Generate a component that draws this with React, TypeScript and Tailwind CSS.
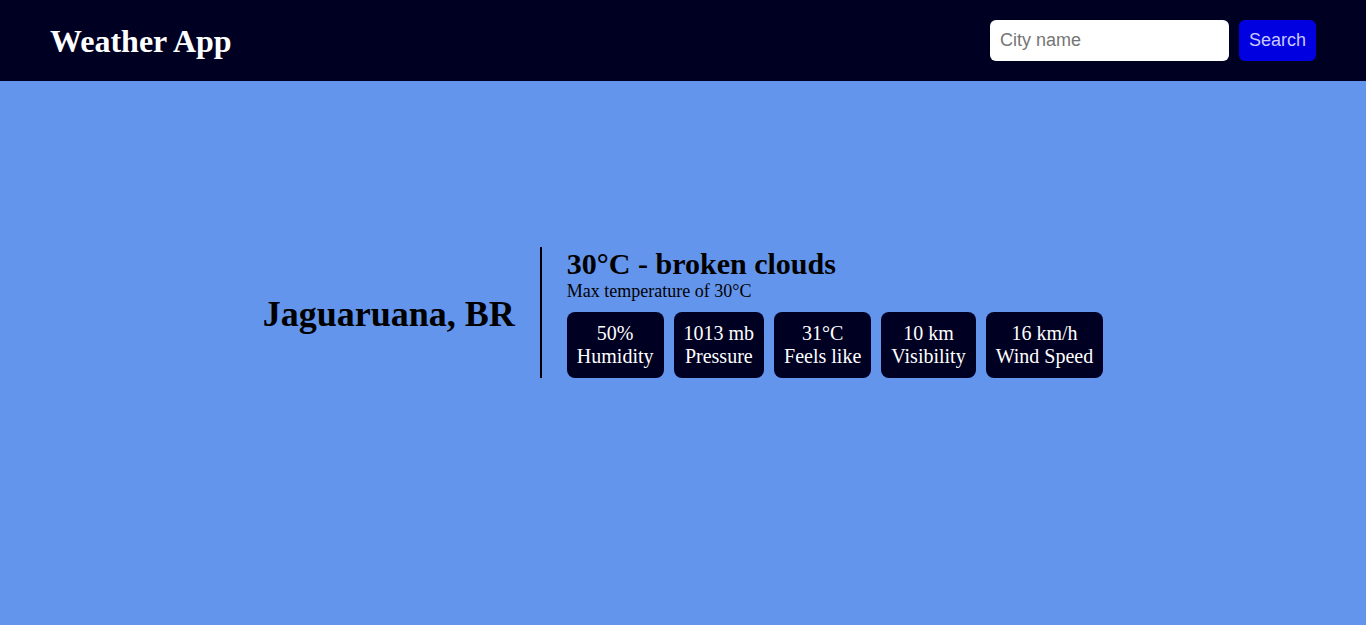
import { useState } from 'react'

const stats = [
    { value: '50%', label: 'Humidity' },
    { value: '1013 mb', label: 'Pressure' },
    { value: '31°C', label: 'Feels like' },
    { value: '10 km', label: 'Visibility' },
    { value: '16 km/h', label: 'Wind Speed' },
]

export default function App() {
    const [city, setCity] = useState('')

    return (
        <div className="min-h-screen bg-[#6495ed] font-['Liberation_Serif',serif]">
            <header className="flex items-center justify-between h-[81px] bg-[#000022] pl-[50px] pr-[50px]">
                <h1 className="text-[32px] font-bold text-white leading-none">
                    Weather App
                </h1>
                <div className="flex items-center gap-[10px]">
                    <input
                        value={city}
                        onChange={(e) => setCity(e.target.value)}
                        placeholder="City name"
                        className="w-[239px] h-[41px] rounded-[6px] bg-white px-[10px] text-[18px] font-['Liberation_Sans',sans-serif] text-black placeholder:text-[#757575] outline-none"
                    />
                    <button className="h-[41px] px-[10px] rounded-[6px] bg-[#0000e0] text-[#c8c8ff] text-[18px] font-['Liberation_Sans',sans-serif]">
                        Search
                    </button>
                </div>
            </header>
            <main className="flex justify-center pt-[166px]">
                <div className="flex items-stretch">
                    <div className="flex items-center pr-[25px] border-r-2 border-black">
                        <h2 className="text-[36px] font-bold text-black leading-none pt-[2px]">
                            Jaguaruana, BR
                        </h2>
                    </div>
                    <div className="pl-[25px] text-black">
                        <h3 className="text-[30px] font-bold leading-[34px]">
                            30°C - broken clouds
                        </h3>
                        <p className="text-[18px] leading-[21px]">
                            Max temperature of 30°C
                        </p>
                        <div className="flex gap-[10px] mt-[10px]">
                            {stats.map((s) => (
                                <div
                                    key={s.label}
                                    className="bg-[#000022] text-white rounded-[8px] px-[10px] py-[10px] text-center text-[20px] leading-[23px]"
                                >
                                    <div>{s.value}</div>
                                    <div>{s.label}</div>
                                </div>
                            ))}
                        </div>
                    </div>
                </div>
            </main>
        </div>
    )
}
